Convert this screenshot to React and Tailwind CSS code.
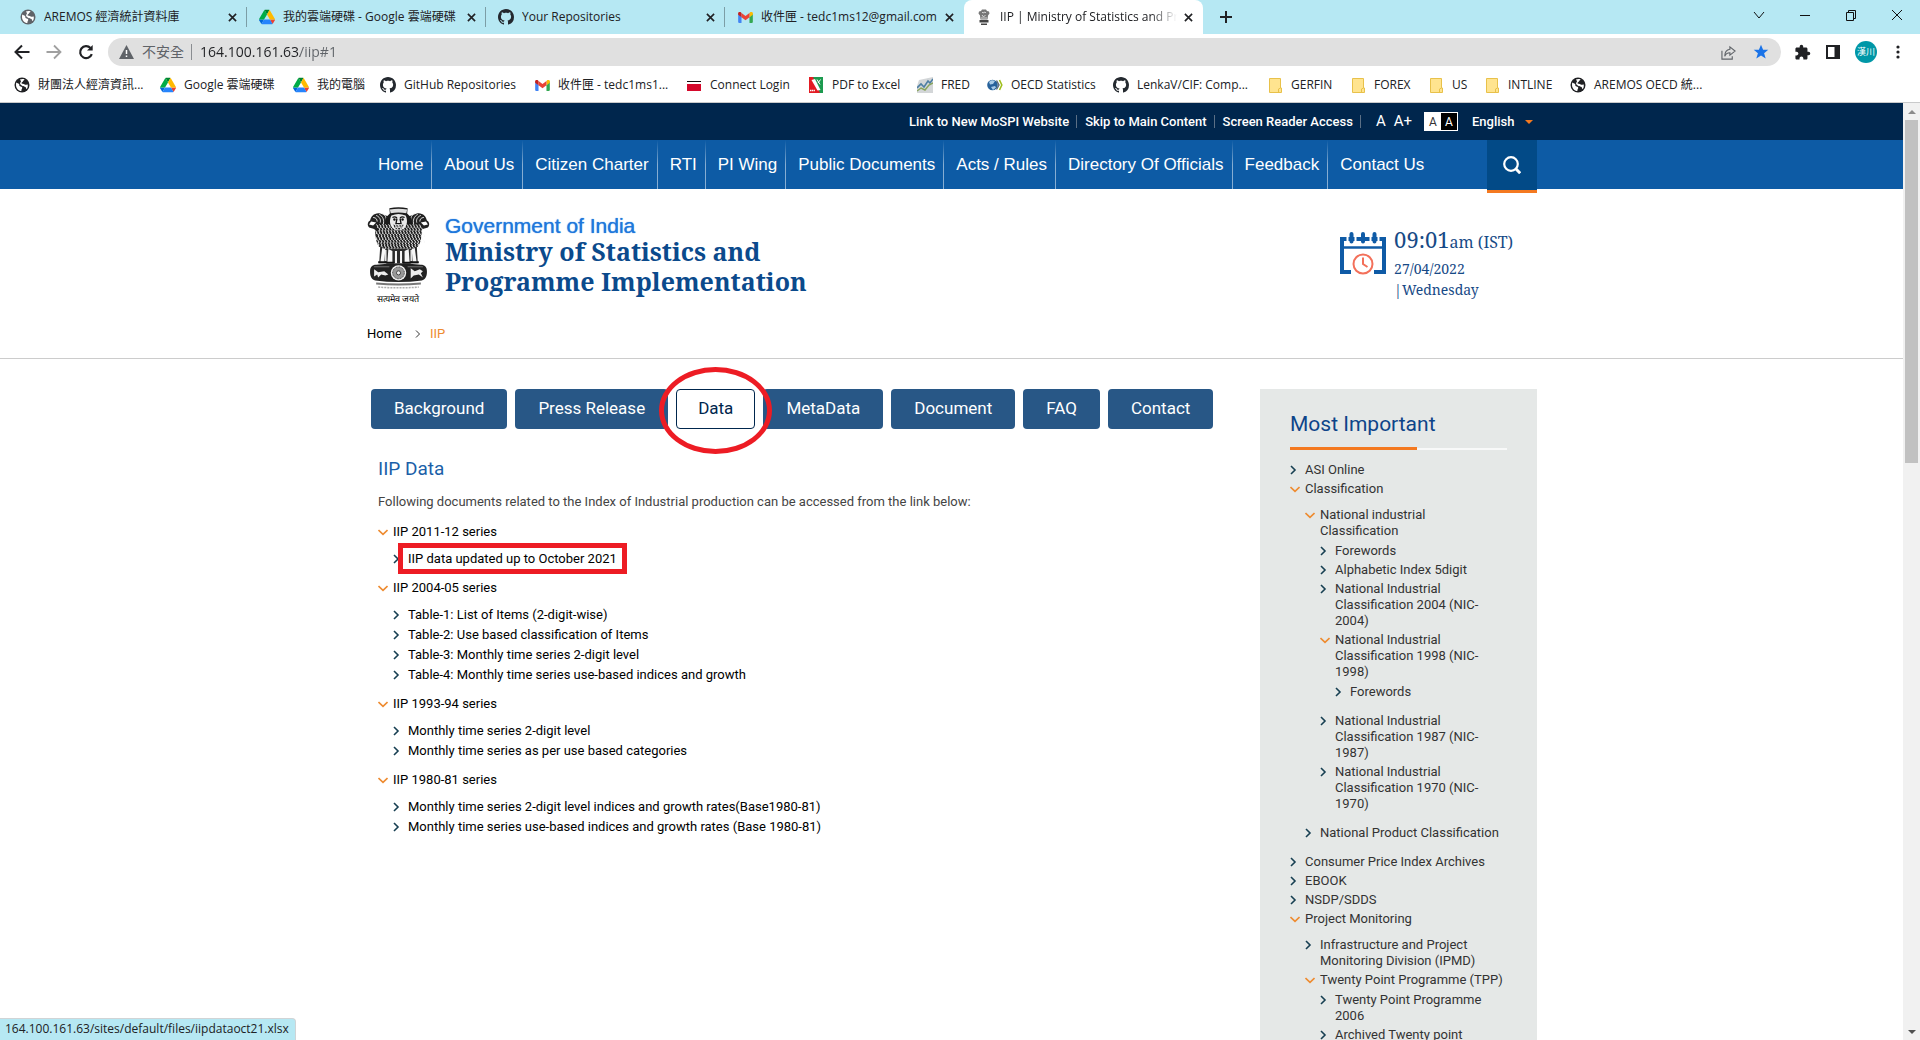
import React from "react";

const UI = "font-['Open_Sans','Noto_Sans_CJK_TC',sans-serif]";
const ROBOTO = "font-[Roboto,sans-serif]";
const SERIF = "font-['Noto_Serif','DejaVu_Serif_Condensed','DejaVu_Serif',serif]";

/* ---------- icons ---------- */

function Globe({ className = "text-[#202124]" }) {
  return (
    <svg viewBox="0 0 16 16" className={`size-4 shrink-0 ${className}`} aria-hidden="true">
      <circle cx="8" cy="8" r="7.5" fill="currentColor" />
      <path d="M2.2 5.6c1.2 1 2 .6 2.8 1.5.8.8-.2 1.5 1 2.2 1 .5 1.900.2 2.200 1.200.3 1.200-1 1.600-.8 3.600C4.500 13.800 2 11.200 2 8c0-.900.1-1.700.2-2.400z" fill="#fff" />
      <path d="M6 2.600c1.300-.700 3-.8 4.600-.2-.3 1-1.500.9-1.600 1.900-.1.8-1.200.9-1.500 1.500-.2.7.5 1 1.400 1 1.200 0 1.500.8 2.500.9.9 0 1.200-.5 2.300-.2.3 1.700 0 3.300-.9 4.600-.8-.3-.7-1.300-1.300-2.100-.7-.9-2.200-.3-3-1.100C7.600 8 6.400 7.800 6.100 6.700 5.800 5.500 7.300 5 6.900 4 6.700 3.500 6 3.300 6 2.600z" fill="#fff" />
    </svg>
  );
}

function Drive() {
  return (
    <svg viewBox="0 0 87.300 78" className="size-4 shrink-0" aria-hidden="true">
      <path d="m6.600 66.850 3.850 6.650c.8 1.400 1.950 2.500 3.300 3.300l13.750-23.800h-27.500c0 1.550.4 3.100 1.200 4.500z" fill="#0066da" />
      <path d="m43.650 25-13.750-23.800c-1.350.8-2.500 1.900-3.300 3.300l-25.400 44a9.060 9.060 0 0 0 -1.200 4.500h27.500z" fill="#00ac47" />
      <path d="m73.550 76.800c1.350-.8 2.500-1.900 3.300-3.300l1.600-2.750 7.650-13.250c.8-1.400 1.200-2.950 1.200-4.500h-27.502l5.852 11.500z" fill="#ea4335" />
      <path d="m43.650 25 13.750-23.800c-1.350-.8-2.900-1.200-4.500-1.200h-18.500c-1.600 0-3.150.45-4.500 1.200z" fill="#00832d" />
      <path d="m59.800 53h-32.300l-13.750 23.800c1.350.8 2.900 1.200 4.500 1.200h50.800c1.600 0 3.150-.45 4.500-1.200z" fill="#2684fc" />
      <path d="m73.400 26.500-12.700-22c-.8-1.400-1.950-2.500-3.300-3.300l-13.750 23.800 16.150 28h27.450c0-1.550-.4-3.100-1.200-4.500z" fill="#ffba00" />
    </svg>
  );
}

function GitHub() {
  return (
    <svg viewBox="0 0 16 16" className="size-4 shrink-0" fill="#24292f" aria-hidden="true">
      <path d="M8 0C3.580 0 0 3.580 0 8c0 3.540 2.290 6.530 5.470 7.590.4.070.55-.17.55-.38 0-.19-.01-.82-.01-1.490-2.010.37-2.530-.49-2.690-.94-.09-.23-.48-.94-.82-1.130-.28-.15-.68-.52-.01-.53.63-.01 1.080.58 1.230.82.72 1.210 1.870.87 2.330.66.07-.52.28-.87.51-1.070-1.780-.2-3.640-.89-3.640-3.950 0-.87.31-1.590.82-2.150-.08-.2-.36-1.020.08-2.120 0 0 .67-.21 2.200.82.64-.18 1.320-.27 2-.27s1.360.09 2 .27c1.530-1.040 2.200-.82 2.200-.82.44 1.100.16 1.920.08 2.120.51.56.82 1.270.82 2.150 0 3.070-1.870 3.750-3.650 3.950.29.25.54.73.54 1.480 0 1.070-.01 1.930-.01 2.200 0 .21.15.46.55.38A8.010 8.010 0 0 0 16 8c0-4.420-3.580-8-8-8z" />
    </svg>
  );
}

function Gmail() {
  return (
    <svg viewBox="0 0 24 18" className="h-[11px] w-[15px] shrink-0" aria-hidden="true">
      <path d="M0 2v14.500C0 17.300.7 18 1.600 18h3.900V8.500z" fill="#4285f4" />
      <path d="M18.500 18h3.900c.9 0 1.600-.7 1.600-1.500V2l-5.500 6.500z" fill="#34a853" />
      <path d="M18.500 1.500v7L24 4.400V2.200c0-2-2.300-3.200-3.900-2z" fill="#fbbc04" />
      <path d="M5.500 8.500v-7L12 6.400l6.500-4.900v7L12 13.400z" fill="#ea4335" />
      <path d="M0 2.200v2.200l5.500 4.100v-7L3.900.2C2.300-1 0 .2 0 2.200z" fill="#c5221f" />
    </svg>
  );
}

function Folder() {
  return (
    <svg viewBox="0 0 13 15" className="h-[15px] w-[13px] shrink-0" aria-hidden="true">
      <path d="M.5.500h11v9.500h1v4.500H.5z" fill="#ffe48f" stroke="#e8c14a" />
      <path d="M9.500 14.500v-3.500l2-1" fill="none" stroke="#e8c14a" />
    </svg>
  );
}

function ConnectIcon() {
  return (
    <svg viewBox="0 0 14 14" className="size-[14px] shrink-0" aria-hidden="true">
      <path d="M0 3h14v1H0z" fill="#111" />
      <path d="M0 6h14v7H0z" fill="#d5092c" />
    </svg>
  );
}

function PdfIcon() {
  return (
    <svg viewBox="0 0 14 16" className="h-4 w-[14px] shrink-0" aria-hidden="true">
      <path d="M0 0h14v16H0z" fill="#e31b23" />
      <path d="M4 0h10v16h-3z" fill="#1c9a4f" />
      <path d="M2.500 3 6 2l5.500 11-3 .5z" fill="#fff" />
      <path d="M8 2.500l3 5M11.500 2.500 9 6" stroke="#fff" />
      <path d="M1 13.500h5" stroke="#fff" strokeWidth="1.500" strokeDasharray="1.300 .5" />
    </svg>
  );
}

function FredIcon() {
  return (
    <svg viewBox="0 0 16 16" className="size-4 shrink-0" aria-hidden="true">
      <path d="M2 3 16 0v16H0V9z" fill="#d3d6d8" />
      <path d="m0 11 4-4 3 3 4-6 2 2 3-4" fill="none" stroke="#4d7ea3" strokeWidth="1.600" />
      <path d="m0 14 4-3 4 2 4-5 4-2" fill="none" stroke="#87a35c" strokeWidth="1.400" />
    </svg>
  );
}

function OecdIcon() {
  return (
    <svg viewBox="0 0 16 14" className="h-[14px] w-4 shrink-0" aria-hidden="true">
      <circle cx="5.500" cy="7" r="5.300" fill="#27629b" />
      <path d="M2 4c2-2 4-2 6-1L6 6 3 6.500zM4 9l4-1 1 1.500L6 12z" fill="#a9cbe6" />
      <path d="m9.500 2.500 2.500 4.500-2.500 4.500" fill="none" stroke="#5d6d75" strokeWidth="1.400" />
      <path d="m12.500 2 2.300 5-2.300 5" fill="none" stroke="#9fbf1c" strokeWidth="1.600" />
    </svg>
  );
}

function EmblemSmall() {
  return (
    <svg viewBox="0 0 12 16" className="h-4 w-3 shrink-0" aria-hidden="true">
      <path d="M4 .5h4l1 1.500 2 .5.5 2-1.500 2-.5 4h-7L2 6.500.5 4.500l.5-2 2-.5z" fill="#777" />
      <path d="M4 3l1 1 2-1 1 1M4 6l1.500 2L7.500 6M4 8v2M6 8v2M8 8v2" stroke="#eee" fill="none" strokeWidth=".8" />
      <path d="M1.500 11h9v2.500h-9zM3 14.500h6V16H3z" fill="#444" />
    </svg>
  );
}

const CURLS = [];
for (let r = 0; r < 10; r++) {
  const inset = r < 2 ? 9 : r < 6 ? 8 : 10 + (r - 6) * 2;
  for (let x = inset; x < 62 - inset; x += 3) {
    CURLS.push([x + (r % 2) * 2, 22 + r * 3]);
  }
}

function Emblem() {
  return (
    <svg viewBox="0 0 62 84" className="h-[86px] w-[63px]" role="img" aria-label="State Emblem of India">
      {/* side lions */}
      <path d="M13 6C7 5 4 9 3 13c-2 1-3 4-1.500 6C3 21 6 20 8 22c0 6 1 13 4 17l12-3V10z" fill="#222" />
      <path d="M49 6c6-1 9 3 10 7 2 1 3 4 1.500 6-1.500 2-4.500 1-6.500 3 0 6-1 13-4 17l-12-3V10z" fill="#222" />
      <path d="M4 14l5 1-3 3-4-1zM58 14l-5 1 3 3 4-1z" fill="#fff" />
      <path d="M9 8c3 1 5 4 4 7M12 7c4 2 5 6 4 10M6 10c3 0 4 2 4 4M15 6c4 2 5 6 3 11M53 8c-3 1-5 4-4 7M50 7c-4 2-5 6-4 10M56 10c-3 0-4 2-4 4M47 6c-4 2-5 6-3 11" fill="none" stroke="#eee" strokeWidth=".9" />
      {/* central lion */}
      <path d="M22 1q9-2 18 0l-.5 5c4 3 6 8 5 14l7 5-4 14-7 5H21.500l-7-5-4-14 7-5c-1-6 1-11 5-14z" fill="#1b1b1b" />
      <path d="M22.500 2.200q8.500-1.700 17 0l-.8 3.600q-7.700-1.500-15.400 0z" fill="#ddd" />
      <path d="M24 8q7-3 14 0c2 4 2 9-1 12-2 3-10 3-12 0-3-3-3-8-1-12z" fill="#e9e9e9" />
      <path d="M25 10q2.500-1.500 4.500.5M37 10q-2.500-1.500-4.500.5M29.500 11l-1 5h5l-1-5" fill="none" stroke="#111" strokeWidth="1.300" />
      <circle cx="27" cy="12" r="1.200" fill="#111" />
      <circle cx="35" cy="12" r="1.200" fill="#111" />
      <path d="M26 17q5 2 10 0-1 5-5 5t-5-5z" fill="#222" />
      <path d="M28 19.500h6" stroke="#fff" strokeWidth=".9" />
      {/* manes */}
      <g fill="none" stroke="#f8f8f8" strokeWidth=".9">
        {CURLS.map(([x, y]) => (
          <path key={`${x}-${y}`} d={`M${x} ${y - 5}q2.400.6 1.400 3.200`} />
        ))}
      </g>
      {/* legs */}
      <path d="M13 38l5 3h26l5-3 1 17H12z" fill="#2b2b2b" />
      <path d="M15 40l3 1-1 14h-4zM21 41l4 2v12h-5zM37 43l4-2 1 14h-5zM44 41l3-1 2 15h-4zM27.500 43h2v12h-2zM32.500 43h2v12h-2z" fill="#f6f6f6" />
      <path d="M18.500 42v11M43.500 42v11" stroke="#fff" strokeWidth="1.300" />
      <path d="M11 54h8M19 54.500h8M35 54.500h8M43 54h8" stroke="#111" strokeWidth="2" />
      {/* abacus */}
      <path d="M9 56.500q22-3 44 0c4 0 6 2 6 7s-2 8-5 8.500q-23 3-46 0c-3-.5-5-3.500-5-8.500s2-7 6-7z" fill="#222" />
      <circle cx="31" cy="64.500" r="7.600" fill="#f2f2f2" />
      <circle cx="31" cy="64.500" r="5.800" fill="#999" stroke="#333" strokeWidth=".9" strokeDasharray="1 .6" />
      <circle cx="31" cy="64.500" r="2" fill="#eee" stroke="#222" strokeWidth=".7" />
      <path d="M7 61l4 3 6-1 4 3-3 1-4-1-3 3-1-3-3 2zM43 60l4 3 5-2 3 2-2 2 2 4-4-3-5 1-3 3z" fill="#eee" />
      <path d="M7 58.500h15M40 58.500h15" stroke="#888" strokeWidth=".8" />
      <path d="M9 74q22 2 44 0v2q-22 2-44 0z" fill="#777" />
      <path d="M11 78.500q20 1.500 40 0" stroke="#aaa" strokeWidth="1.500" strokeDasharray="2 1" fill="none" />
    </svg>
  );
}

function Calendar() {
  return (
    <svg viewBox="0 0 46 44" className="h-[44px] w-[46px] shrink-0" aria-hidden="true">
      <path d="M11 40H2V7h42v33h-10" fill="none" stroke="#0f5ba6" strokeWidth="4" />
      <path d="M2 15.500h42" stroke="#0f5ba6" strokeWidth="2.500" />
      <path d="M7.500 3v8M15.500 3v8M30.500 3v8M38.500 3v8" stroke="#fff" strokeWidth="2" />
      <path d="M11.500 2v7.500M23 2v7.500M34.500 2v7.500" stroke="#0f5ba6" strokeWidth="4" strokeLinecap="round" />
      <circle cx="23" cy="32" r="12" fill="#fff" />
      <circle cx="23" cy="32" r="9.500" fill="#fff" stroke="#f3705a" strokeWidth="2" />
      <path d="M23 25.500V32l4.500 3" fill="none" stroke="#f3705a" strokeWidth="2" />
    </svg>
  );
}

function Right() {
  return (
    <svg viewBox="0 0 7 10" className="h-[10px] w-[7px]" fill="none" stroke="#173f52" strokeWidth="1.600" aria-hidden="true">
      <path d="M1 1l4 4-4 4" />
    </svg>
  );
}

function Down() {
  return (
    <svg viewBox="0 0 10 7" className="h-[7px] w-[10px]" fill="none" stroke="#ee8b30" strokeWidth="1.600" aria-hidden="true">
      <path d="M.5 1 5 5.300 9.500 1" />
    </svg>
  );
}

/* ---------- browser chrome ---------- */

function CloseX() {
  return (
    <svg viewBox="0 0 10 10" className="size-[9px]" stroke="#202124" strokeWidth="1.800" aria-hidden="true">
      <path d="M1 1l8 8M9 1 1 9" />
    </svg>
  );
}

const TABS = [
  { icon: <Globe className="text-[#5f6368]" />, title: "AREMOS 經濟統計資料庫" },
  { icon: <Drive />, title: "我的雲端硬碟 - Google 雲端硬碟" },
  { icon: <GitHub />, title: "Your Repositories" },
  { icon: <Gmail />, title: "收件匣 - tedc1ms12@gmail.com", last: true },
  { icon: <EmblemSmall />, title: "IIP | Ministry of Statistics and Programme", active: true },
];

function TabStrip() {
  return (
    <div className="flex h-[34px] items-stretch bg-[#b6e8f3] pl-2">
      {TABS.map((t) => (
        <div
          key={t.title}
          className={`relative flex w-[239px] items-center pl-3 ${t.active ? "rounded-t-lg bg-white" : ""}`}
        >
          <span className="flex w-4 shrink-0 justify-center">{t.icon}</span>
          <button className={`ml-2 w-[177px] overflow-hidden text-left text-[12px] whitespace-nowrap text-[#202124] ${t.title.length > 26 ? "[mask-image:linear-gradient(90deg,#000_150px,transparent_177px)]" : ""}`}>
            {t.title}
          </button>
          <button aria-label="Close tab" className="ml-[7px]">
            <CloseX />
          </button>
          {!t.active && !t.last && <span className="absolute right-0 h-5 w-px bg-[#7c9ea6]" />}
        </div>
      ))}
      <button aria-label="New tab" className="ml-[17px] self-center">
        <svg viewBox="0 0 12 12" className="size-3" stroke="#202124" strokeWidth="2"><path d="M6 0v12M0 6h12" /></svg>
      </button>
      <div className="mr-[17px] mb-[5px] ml-auto flex items-center gap-[34px]">
        <button aria-label="Search tabs">
          <svg viewBox="0 0 12 12" className="size-3" fill="none" stroke="#111"><path d="M1 3l5 6 5-6" /></svg>
        </button>
        <button aria-label="Minimize">
          <svg viewBox="0 0 12 12" className="size-3" stroke="#111"><path d="M1 6.500h10" /></svg>
        </button>
        <button aria-label="Restore">
          <svg viewBox="0 0 12 12" className="size-3" fill="none" stroke="#111"><path d="M1.500 3.500h7v8h-7zM3.500 3.500v-2h7v8h-2" /></svg>
        </button>
        <button aria-label="Close">
          <svg viewBox="0 0 12 12" className="size-3" stroke="#111"><path d="M1 1l10 10M11 1 1 11" /></svg>
        </button>
      </div>
    </div>
  );
}

function Toolbar() {
  return (
    <div className="flex h-9 items-center bg-white pl-[14px]">
      <button aria-label="Back">
        <svg viewBox="0 0 16 16" className="size-4" fill="none" stroke="#202124" strokeWidth="2"><path d="M15.500 8H2M8 1.500 1.500 8 8 14.500" /></svg>
      </button>
      <button aria-label="Forward" className="ml-4">
        <svg viewBox="0 0 16 16" className="size-4" fill="none" stroke="#a0a0a0" strokeWidth="1.800"><path d="M.5 8H14M8 1.500 14.500 8 8 14.500" /></svg>
      </button>
      <button aria-label="Reload" className="ml-4">
        <svg viewBox="0 0 16 16" className="size-4" fill="none" stroke="#202124" strokeWidth="2.200">
          <path d="M13.800 10.200A6 6 0 1 1 12.500 4" />
          <path d="M14.700 1v5.600H9z" fill="#202124" stroke="none" />
        </svg>
      </button>
      <div className="ml-[14px] flex h-7 flex-1 items-center rounded-full bg-[#e0e0e0] pr-[12px] pl-[11px]">
        <svg viewBox="0 0 15 14" className="h-[14px] w-[15px]" aria-hidden="true">
          <path d="M7.500 0 15 14H0z" fill="#5f6368" />
          <path d="M7.500 5v4M7.500 10.500v1.600" stroke="#fff" strokeWidth="1.500" />
        </svg>
        <span className="ml-2 text-[14px] leading-5 text-[#5f6368]">不安全</span>
        <span className="mr-2 ml-[7px] h-4 w-px bg-[#8a8d91]" />
        <input
          aria-label="Address and search bar"
          defaultValue="164.100.161.63/iip#1"
          className="flex-1 bg-[linear-gradient(90deg,#202124_100px,#5f6368_100px)] bg-clip-text text-[14px] leading-5 text-transparent outline-none"
        />
        <button aria-label="Share">
          <svg viewBox="0 0 16 16" className="size-[15px]" fill="none" stroke="#5f6368" strokeWidth="1.200">
            <path d="M1 6v9h11v-3" />
            <path d="M9.500 2 15 6.500l-5.500 4.300V8.300C6.500 8.300 5 9.500 4 12c0-4 2-7 5.500-7.500z" />
          </svg>
        </button>
        <button aria-label="Edit bookmark" className="ml-[17px]">
          <svg viewBox="0 0 16 16" className="size-4" fill="#1a73e8">
            <path d="m8 .8 2.100 5h5.200l-4.200 3.400 1.600 5.400L8 11.400l-4.700 3.200 1.600-5.400L.7 5.800h5.200z" />
          </svg>
        </button>
      </div>
      <div className="flex items-center gap-[15px] pr-4 pl-[13px]">
        <button aria-label="Extensions">
          <svg viewBox="0 0 24 24" className="size-[17px]" fill="#202124">
            <path d="M20.500 11H19V7c0-1.100-.9-2-2-2h-4V3.500a2.500 2.500 0 0 0-5 0V5H4c-1.100 0-2 .9-2 2v3.800h1.500c1.500 0 2.700 1.200 2.700 2.700S5 16.200 3.500 16.200H2V20c0 1.100.9 2 2 2h3.800v-1.500c0-1.500 1.200-2.700 2.700-2.700s2.700 1.200 2.700 2.700V22H17c1.100 0 2-.9 2-2v-4h1.500a2.500 2.500 0 0 0 0-5z" />
          </svg>
        </button>
        <button aria-label="Side panel">
          <svg viewBox="0 0 14 14" className="size-[14px]"><path d="M1 1h12v12H1z" fill="#fff" stroke="#202124" strokeWidth="2" /><path d="M8.500 1H13v12H8.500z" fill="#202124" /></svg>
        </button>
        <button className="flex size-[22px] items-center justify-center rounded-full bg-[#0097a7] text-[9px] whitespace-nowrap text-white">漢川</button>
        <button aria-label="Menu">
          <svg viewBox="0 0 12 16" className="h-4 w-3" fill="#202124"><circle cx="6" cy="3" r="1.600" /><circle cx="6" cy="8" r="1.600" /><circle cx="6" cy="13" r="1.600" /></svg>
        </button>
      </div>
    </div>
  );
}

const BOOKMARKS = [
  [<Globe />, "財團法人經濟資訊...", "w-[146px]"],
  [<Drive />, "Google 雲端硬碟", "w-[133px]"],
  [<Drive />, "我的電腦", "w-[87px]"],
  [<GitHub />, "GitHub Repositories", "w-[154px]"],
  [<Gmail />, "收件匣 - tedc1ms1...", "w-[152px]"],
  [<ConnectIcon />, "Connect Login", "w-[122px]"],
  [<PdfIcon />, "PDF to Excel", "w-[109px]"],
  [<FredIcon />, "FRED", "w-[70px]"],
  [<OecdIcon />, "OECD Statistics", "w-[126px]"],
  [<GitHub />, "LenkaV/CIF: Comp...", "w-[154px]"],
  [<Folder />, "GERFIN", "w-[83px]"],
  [<Folder />, "FOREX", "w-[78px]"],
  [<Folder />, "US", "w-[56px]"],
  [<Folder />, "INTLINE", "w-[86px]"],
  [<Globe />, "AREMOS OECD 統...", "w-[154px]"],
];

function BookmarksBar() {
  return (
    <nav aria-label="Bookmarks" className="flex h-[33px] items-center overflow-hidden border-b border-[#c9cacb] bg-white pb-[2px] pl-[14px]">
      {BOOKMARKS.map(([icon, label, width]) => (
        <a key={label} href="#" className={`flex shrink-0 items-center gap-2 text-[12px] whitespace-nowrap text-[#202124] ${width}`}>
          <span className="flex w-4 justify-center">{icon}</span>
          {label}
        </a>
      ))}
    </nav>
  );
}

/* ---------- site ---------- */

const WRAP = "mx-auto w-full max-w-[1171px]";

function TopBar() {
  return (
    <div className="bg-[#00264d]">
      <div className={`${WRAP} flex h-[37px] items-center justify-end text-[13px] font-medium text-white`}>
        {["Link to New MoSPI Website", "Skip to Main Content", "Screen Reader Access"].map((t) => (
          <a key={t} href="#" className="mr-2 border-r border-[#5b6f85] pr-[7px] leading-[13px]">{t}</a>
        ))}
        <button className="ml-[7px] text-[15px] font-normal">A</button>
        <button className="ml-2 text-[15px] font-normal">A+</button>
        <div className="ml-3 flex h-[19px] w-[34px] border border-white text-[12px] font-normal">
          <button className="flex-1 bg-white leading-4 text-[#333]">A</button>
          <button className="flex-1 bg-black leading-4">A</button>
        </div>
        <div className="relative mr-1 ml-[14px]">
          <select aria-label="Language" defaultValue="English" className="w-[61px] appearance-none bg-transparent outline-none">
            <option>English</option>
          </select>
          <span className="pointer-events-none absolute top-2 right-0 border-x-[4px] border-t-[4px] border-x-transparent border-t-[#f47920]" />
        </div>
      </div>
    </div>
  );
}

const NAV = ["Home", "About Us", "Citizen Charter", "RTI", "PI Wing", "Public Documents", "Acts / Rules", "Directory Of Officials", "Feedback", "Contact Us"];

function MainNav() {
  return (
    <div className="h-[49px] bg-[#0d5ba5]">
      <nav className={`${WRAP} flex items-start font-['Liberation_Sans',Arial,sans-serif]`}>
        {NAV.map((t, i) => (
          <React.Fragment key={t}>
            {i > 0 && <span className="h-[49px] w-px bg-linear-to-b from-transparent via-white/50 to-white/50" />}
            <a href="#" className="pr-2 pl-3 text-[17px] leading-[49px] whitespace-nowrap text-white">{t}</a>
          </React.Fragment>
        ))}
        <button aria-label="Search" className="ml-auto flex h-[53px] w-[50px] items-center justify-center border-b-[3px] border-[#f47920] bg-[#024a87]">
          <svg viewBox="0 0 18 18" className="size-[18px]" fill="none" stroke="#fff">
            <circle cx="8" cy="8" r="6.800" strokeWidth="2.200" />
            <path d="m12.800 12.800 4.400 4.400" strokeWidth="3" />
          </svg>
        </button>
      </nav>
    </div>
  );
}

function SiteHeader() {
  return (
    <header className="border-b border-[#cccccc]">
      <div className={`${WRAP} flex items-start pt-[18px]`}>
        <a href="#" className="flex items-start">
          <span className="flex w-[64px] flex-col items-center">
            <Emblem />
            <span className="text-[9px] leading-3 text-black">सत्यमेव जयते</span>
          </span>
          <span className="ml-[15px] flex flex-col pt-2">
            <span className="font-['Liberation_Sans',Arial,sans-serif] text-[21px] leading-[21px] text-[#1f78dc] text-shadow-[0_0_1px_#1f78dc]">Government of India</span>
            <span className={`${SERIF} text-[25px] leading-[30px] font-bold text-[#0b4a8c]`}>
              Ministry of Statistics and
              <br />
              Programme Implementation
            </span>
          </span>
        </a>
        <div className={`${SERIF} mr-[24px] ml-auto flex gap-2 pt-[18px] text-[#174a86]`}>
          <span className="pt-[7px]"><Calendar /></span>
          <div>
            <div className="text-[16px] leading-7"><span className="text-[22px]">09:01</span>am (IST)</div>
            <div className="pt-[2px] text-[14px] leading-[21px]">27/04/2022<br />|Wednesday</div>
          </div>
        </div>
      </div>
      <div className={`${WRAP} flex h-[53px] items-center pt-1 pl-px text-[13px]`}>
        <a href="#" className="text-black">Home</a>
        <span className="mr-[9px] ml-[13px] flex"><svg viewBox="0 0 6 8" className="h-2 w-[6px]" fill="none" stroke="#333"><path d="M1 .5 4.500 4 1 7.500" /></svg></span>
        <span className="text-[#ee8b30]">IIP</span>
      </div>
    </header>
  );
}

const PAGE_TABS = ["Background", "Press Release", "Data", "MetaData", "Document", "FAQ", "Contact"];

function PageTabs() {
  return (
    <div className="flex gap-2 pl-[5px]">
      {PAGE_TABS.map((t) =>
        t === "Data" ? (
          <div key={t} className="relative">
            <button className="h-10 rounded-[4px] border border-[#00264d] bg-white px-[21px] text-[17px] text-[#00264d]">{t}</button>
            <span className="pointer-events-none absolute -inset-x-[17px] -top-[22px] -bottom-[25px] z-10 rounded-[50%] border-[5px] border-[#ed1c24]" />
          </div>
        ) : (
          <button key={t} className="h-10 rounded-[4px] bg-[#285786] px-[23px] text-[17px] text-white">{t}</button>
        ),
      )}
    </div>
  );
}

const SERIES = [
  ["IIP 2011-12 series", ["IIP data updated up to October 2021"]],
  ["IIP 2004-05 series", [
    "Table-1: List of Items (2-digit-wise)",
    "Table-2: Use based classification of Items",
    "Table-3: Monthly time series 2-digit level",
    "Table-4: Monthly time series use-based indices and growth",
  ]],
  ["IIP 1993-94 series", ["Monthly time series 2-digit level", "Monthly time series as per use based categories"]],
  ["IIP 1980-81 series", [
    "Monthly time series 2-digit level indices and growth rates(Base1980-81)",
    "Monthly time series use-based indices and growth rates (Base 1980-81)",
  ]],
];

function DataList() {
  return (
    <section className="pl-3">
      <h1 className="mt-7 text-[19px] leading-6 text-[#1b5fa8]">IIP Data</h1>
      <p className="mt-[11px] text-[13px] leading-5 text-[#444]">
        Following documents related to the Index of Industrial production can be accessed from the link below:
      </p>
      <ul className="mt-[10px] text-[13px] leading-5 text-black">
        {SERIES.map(([name, items], s) => (
          <li key={name}>
            <div className="flex items-center"><span className="w-[15px]"><Down /></span>{name}</div>
            <ul className="mt-[7px] mb-[9px] pl-[15px]">
              {items.map((t) => (
                <li key={t} className="flex items-center">
                  <span className="w-[15px]"><Right /></span>
                  <a href="#" className="relative">
                    {t}
                    {s === 0 && <span className="pointer-events-none absolute -inset-x-[10px] -top-[6px] -bottom-[5px] border-[5px] border-[#ed1c24]" />}
                  </a>
                </li>
              ))}
            </ul>
          </li>
        ))}
      </ul>
    </section>
  );
}

const TREE = [
  ["ASI Online"],
  ["Classification", [
    ["National industrial Classification", [
      ["Forewords"],
      ["Alphabetic Index 5digit"],
      ["National Industrial Classification 2004 (NIC-2004)"],
      ["National Industrial Classification 1998 (NIC-1998)", [["Forewords"]]],
      ["National Industrial Classification 1987 (NIC-1987)"],
      ["National Industrial Classification 1970 (NIC-1970)"],
    ]],
    ["National Product Classification"],
  ]],
  ["Consumer Price Index Archives"],
  ["EBOOK"],
  ["NSDP/SDDS"],
  ["Project Monitoring", [
    ["Infrastructure and Project Monitoring Division (IPMD)"],
    ["Twenty Point Programme (TPP)", [["Twenty Point Programme 2006"], ["Archived Twenty point programme"]]],
  ]],
];

function Tree({ nodes, depth = 0 }) {
  return (
    <ul className={`flex flex-col gap-[3px] ${depth === 0 ? "" : depth === 1 ? "mt-[10px] mb-[10px] pl-[15px]" : "mt-1 mb-[10px] pl-[15px]"}`}>
      {nodes.map(([label, kids]) => (
        <li key={label}>
          <div className="flex">
            <span className="flex h-4 w-[15px] shrink-0 items-center">{kids ? <Down /> : <Right />}</span>
            <a href="#">{label}</a>
          </div>
          {kids && <Tree nodes={kids} depth={depth + 1} />}
        </li>
      ))}
    </ul>
  );
}

function Sidebar() {
  return (
    <aside className="w-[277px] shrink-0 bg-[#e5e8e7] px-[30px] pt-[21px] text-[#333]">
      <h2 className="text-[21px] leading-7 text-[#0d4489]">Most Important</h2>
      <div className="mt-[9px] flex items-end">
        <span className="h-[3px] w-[127px] bg-[#f47920]" />
        <span className="h-[2px] flex-1 bg-[#f8f9f9]" />
      </div>
      <div className="pt-3 pr-[3px] text-[13px] leading-4"><Tree nodes={TREE} /></div>
    </aside>
  );
}

function Scrollbar() {
  return (
    <div className="flex w-[17px] shrink-0 flex-col items-center bg-[#f1f1f1]" aria-hidden="true">
      <span className="mt-[7px] border-x-[4px] border-b-[4px] border-x-transparent border-b-[#8b8b8b]" />
      <span className="mt-[6px] h-[343px] w-[13px] bg-[#c1c1c1]" />
      <span className="mt-auto mb-[6px] border-x-[4px] border-t-[4px] border-x-transparent border-t-[#505050]" />
    </div>
  );
}

export default function App() {
  return (
    <div className={`relative flex h-screen flex-col overflow-hidden bg-white ${UI}`}>
      <TabStrip />
      <Toolbar />
      <BookmarksBar />
      <div className="flex min-h-0 flex-1">
        <main className={`min-w-0 flex-1 overflow-hidden ${ROBOTO}`}>
          <TopBar />
          <MainNav />
          <SiteHeader />
          <div className={`${WRAP} flex items-stretch pt-[30px]`}>
            <div className="min-w-0 flex-1">
              <PageTabs />
              <DataList />
            </div>
            <Sidebar />
          </div>
        </main>
        <Scrollbar />
      </div>
      <div className="absolute bottom-0 left-0 h-[22px] rounded-tr border-t border-r border-[#d0d4d6] bg-[#b6e8f3] pr-[6px] pl-[5px] text-[12px] leading-5 text-[#202124]">
        164.100.161.63/sites/default/files/iipdataoct21.xlsx
      </div>
    </div>
  );
}
